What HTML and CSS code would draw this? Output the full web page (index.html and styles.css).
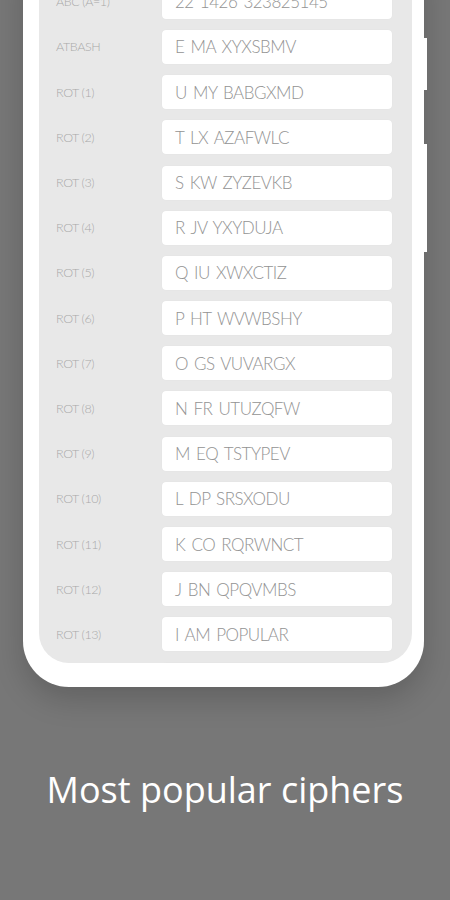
FILE: index.html
```html
<!DOCTYPE html>
<html>
<head>
<meta charset="utf-8">
<link rel="stylesheet" href="styles.css">
</head>
<body>
<div class="stage">
  <div class="phone">
    <span class="btn btn-a"></span>
    <span class="btn btn-b"></span>
    <div class="screen">
      <div class="row"><span class="label">ABC (A=1)</span><span class="box">22 1426 323825145</span></div>
      <div class="row"><span class="label">ATBASH</span><span class="box">E MA XYXSBMV</span></div>
      <div class="row"><span class="label">ROT (1)</span><span class="box">U MY BABGXMD</span></div>
      <div class="row"><span class="label">ROT (2)</span><span class="box">T LX AZAFWLC</span></div>
      <div class="row"><span class="label">ROT (3)</span><span class="box">S KW ZYZEVKB</span></div>
      <div class="row"><span class="label">ROT (4)</span><span class="box">R JV YXYDUJA</span></div>
      <div class="row"><span class="label">ROT (5)</span><span class="box">Q IU XWXCTIZ</span></div>
      <div class="row"><span class="label">ROT (6)</span><span class="box">P HT WVWBSHY</span></div>
      <div class="row"><span class="label">ROT (7)</span><span class="box">O GS VUVARGX</span></div>
      <div class="row"><span class="label">ROT (8)</span><span class="box">N FR UTUZQFW</span></div>
      <div class="row"><span class="label">ROT (9)</span><span class="box">M EQ TSTYPEV</span></div>
      <div class="row"><span class="label">ROT (10)</span><span class="box">L DP SRSXODU</span></div>
      <div class="row"><span class="label">ROT (11)</span><span class="box">K CO RQRWNCT</span></div>
      <div class="row"><span class="label">ROT (12)</span><span class="box">J BN QPQVMBS</span></div>
      <div class="row"><span class="label">ROT (13)</span><span class="box">I AM POPULAR</span></div>
      <div class="row"><span class="label">ROT (14)</span><span class="box">H ZL ONOTKZQ</span></div>
    </div>
  </div>
  <h1 class="title">Most popular ciphers</h1>
</div>
</body>
</html>
```
FILE: styles.css
```css
html, body {
  margin: 0;
  padding: 0;
  background: #777777;
  height: 900px;
  overflow: hidden;
}
.stage {
  display: flex;
  flex-direction: column;
  align-items: flex-start;
}
.phone {
  position: relative;
  box-sizing: border-box;
  width: 401px;
  margin: -40px 0 0 23px;
  padding: 0 12px 24px 16px;
  background: #ffffff;
  border-radius: 0 0 46px 46px;
  box-shadow: 0 12px 30px rgba(0, 0, 0, 0.18);
}
.btn {
  position: absolute;
  right: -3px;
  width: 3px;
  background: #ffffff;
}
.btn-a { top: 78px; height: 52px; }
.btn-b { top: 184px; height: 108px; }
.screen {
  box-sizing: border-box;
  height: 703px;
  overflow: hidden;
  background: #e8e8e8;
  border-radius: 0 0 30px 30px;
  padding: 24.8px 20px 0 17px;
  display: flex;
  flex-direction: column;
  gap: 11.2px;
}
.row {
  display: flex;
  align-items: center;
  height: 34px;
  flex-shrink: 0;
}
.label {
  width: 106px;
  font-family: "Lato", "Liberation Sans", sans-serif;
  font-weight: 300;
  font-size: 12.5px;
  color: #a8a8a8;
  letter-spacing: -0.4px;
}
.box {
  box-sizing: border-box;
  width: 230px;
  height: 34px;
  background: #ffffff;
  border-radius: 4px;
  padding: 0 13px;
  display: flex;
  align-items: center;
  font-family: "Lato", "Liberation Sans", sans-serif;
  font-weight: 300;
  font-size: 17px;
  letter-spacing: -0.5px;
  word-spacing: 2px;
  color: #939393;
  box-shadow: 0 0 1px rgba(0, 0, 0, 0.08);
}
.title {
  align-self: center;
  margin: 80px 0 0 0;
  font-family: "Open Sans", "Noto Sans", sans-serif;
  font-weight: 400;
  font-size: 36px;
  line-height: 46px;
  color: #ffffff;
  letter-spacing: 0;
}
```
